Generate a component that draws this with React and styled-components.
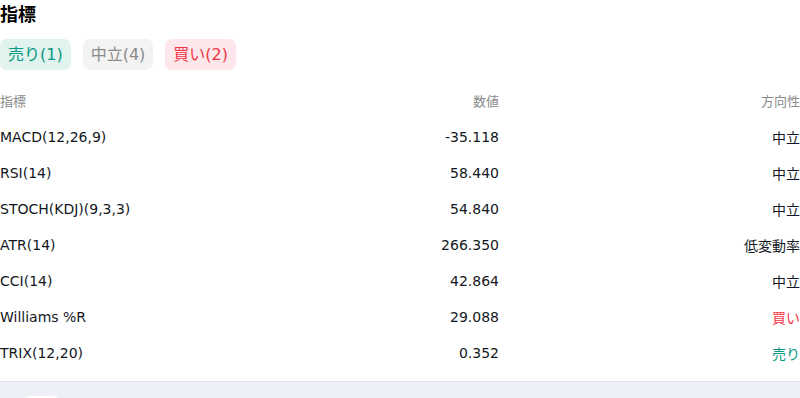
import styled, { createGlobalStyle } from 'styled-components'

const GlobalStyle = createGlobalStyle`
  body {
    margin: 0;
    background: #ffffff;
    font-family: "DejaVu Sans", "Noto Sans CJK JP", sans-serif;
    color: #131722;
  }
`

const Page = styled.div`
  width: 800px;
  height: 398px;
  overflow: hidden;
  display: flex;
  flex-direction: column;
`

const Section = styled.section`
  display: flex;
  flex-direction: column;
`

const Heading = styled.h2`
  margin: -1px 0 0;
  font-size: 18px;
  font-weight: 700;
  line-height: 32px;
  color: #000000;
`

const ChipRow = styled.div`
  display: flex;
  gap: 12px;
  margin-top: 8px;
`

const tones = {
  sell: { fg: '#089981', bg: '#e0f3ef' },
  neutral: { fg: '#8a8a8a', bg: '#f3f3f3' },
  buy: { fg: '#f23645', bg: '#fde7ea' },
}

const Chip = styled.span`
  height: 31px;
  line-height: 31px;
  padding: 0 8px;
  border-radius: 7px;
  font-size: 16px;
  color: ${(p) => tones[p.$tone].fg};
  background: ${(p) => tones[p.$tone].bg};
`

const Table = styled.div`
  margin-top: 11px;
  display: flex;
  flex-direction: column;
`

const Row = styled.div`
  display: grid;
  grid-template-columns: 300px 199px 1fr;
  height: ${(p) => (p.$head ? '38px' : '36px')};
  align-items: center;
  font-size: ${(p) => (p.$head ? '13px' : '14px')};
  color: ${(p) => (p.$head ? '#8a8a8a' : '#131722')};
`

const Cell = styled.div`
  text-align: ${(p) => (p.$right ? 'right' : 'left')};
  color: ${(p) => (p.$tone === 'buy' ? '#f23645' : p.$tone === 'sell' ? '#089981' : 'inherit')};
`

const Footer = styled.div`
  margin-top: auto;
  height: 16px;
  background: #edf0f6;
  border-top: 1px solid #dfe3ea;
  padding-left: 25px;
`

const FooterTab = styled.div`
  width: 34px;
  height: 8px;
  margin-top: 14px;
  background: #ffffff;
  border-radius: 6px 6px 0 0;
`

const rows = [
  { name: 'MACD(12,26,9)', value: '-35.118', dir: '中立' },
  { name: 'RSI(14)', value: '58.440', dir: '中立' },
  { name: 'STOCH(KDJ)(9,3,3)', value: '54.840', dir: '中立' },
  { name: 'ATR(14)', value: '266.350', dir: '低変動率' },
  { name: 'CCI(14)', value: '42.864', dir: '中立' },
  { name: 'Williams %R', value: '29.088', dir: '買い', tone: 'buy' },
  { name: 'TRIX(12,20)', value: '0.352', dir: '売り', tone: 'sell' },
]

function App() {
  return (
    <Page>
      <GlobalStyle />
      <Section>
        <Heading>指標</Heading>
        <ChipRow>
          <Chip $tone="sell">売り(1)</Chip>
          <Chip $tone="neutral">中立(4)</Chip>
          <Chip $tone="buy">買い(2)</Chip>
        </ChipRow>
        <Table>
          <Row $head>
            <Cell>指標</Cell>
            <Cell $right>数値</Cell>
            <Cell $right>方向性</Cell>
          </Row>
          {rows.map((r) => (
            <Row key={r.name}>
              <Cell>{r.name}</Cell>
              <Cell $right>{r.value}</Cell>
              <Cell $right $tone={r.tone}>{r.dir}</Cell>
            </Row>
          ))}
        </Table>
      </Section>
      <Footer>
        <FooterTab />
      </Footer>
    </Page>
  )
}

export default App
